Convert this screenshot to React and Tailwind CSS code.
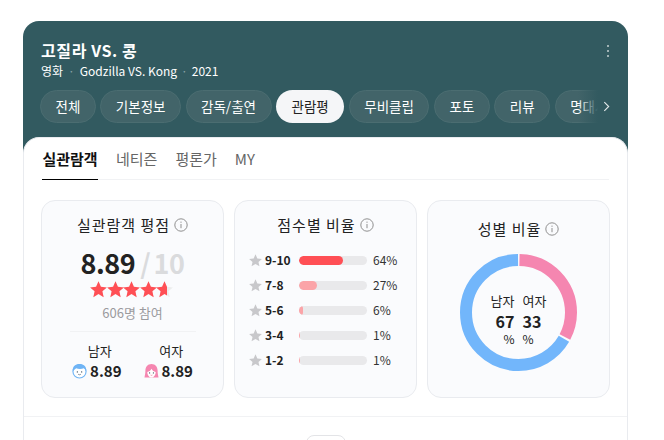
const font = { fontFamily: '"Noto Sans CJK KR", "Noto Sans", sans-serif' };

const tabs = ["전체", "기본정보", "감독/출연", "관람평", "무비클립", "포토", "리뷰", "명대사"];

const rows = [
  { label: "9-10", pct: 64, color: "#ff4f55" },
  { label: "7-8", pct: 27, color: "#fba4a8" },
  { label: "5-6", pct: 6, color: "#fba4a8" },
  { label: "3-4", pct: 1, color: "#fba4a8" },
  { label: "1-2", pct: 1, color: "#fba4a8" },
];

function Star({ className, fill }) {
  return (
    <svg viewBox="0 0 24 24" className={className} fill={fill}>
      <path d="M12 .5l3.400 7.700 8.400.8-6.300 5.600 1.800 8.200L12 18.500l-7.300 4.300 1.800-8.200L.2 9l8.400-.8z" />
    </svg>
  );
}

function Info() {
  return (
    <svg viewBox="0 0 14 14" className="w-[14px] h-[14px] shrink-0" fill="none" stroke="#8f8f8f">
      <circle cx="7" cy="7" r="6.200" />
      <path d="M7 6v4.200M7 3.600v1.200" />
    </svg>
  );
}

function Male() {
  return (
    <svg viewBox="0 0 16 16" className="w-[15px] h-[16px] shrink-0">
      <circle cx="8" cy="8.500" r="7" fill="#fff" stroke="#6fb4f5" strokeWidth="1.200" />
      <path d="M1 8.500C0 3 4 .5 8 .5s8 2.500 7 8c-1-2-1.500-3-2.500-3.500-2 1-6 1-8 0C3 6 2 7 1 8.500z" fill="#6fb4f5" />
      <circle cx="5.700" cy="9" r=".7" fill="#345" />
      <circle cx="10.300" cy="9" r=".7" fill="#345" />
      <path d="M6.500 11.500q1.500 1 3 0" fill="none" stroke="#345" strokeWidth=".6" />
    </svg>
  );
}

function Female() {
  return (
    <svg viewBox="0 0 16 16" className="w-[15px] h-[16px] shrink-0">
      <path d="M8 .5c4 0 6.500 3 6.500 7 0 3 .5 5 1 7.500H.5c.5-2.500 1-4.500 1-7.500 0-4 2.500-7 6.500-7z" fill="#f586b0" />
      <path d="M3.500 9c2-.5 3.500-1.500 4.500-3.500 1 2 2.500 3 4.500 3.500 0 3-2 6-4.500 6s-4.500-3-4.500-6z" fill="#fff" />
      <circle cx="6" cy="10" r=".6" fill="#345" />
      <circle cx="10" cy="10" r=".6" fill="#345" />
      <path d="M7 12.300q1 .7 2 0" fill="none" stroke="#e5557f" strokeWidth=".6" />
    </svg>
  );
}

function Panel({ title, low, children }) {
  return (
    <div className="flex-1 h-[198px] rounded-[14px] border border-[#e9ebef] bg-[#fafbfd] flex flex-col items-center">
      <div className={`${low ? "mt-[17px]" : "mt-[13px]"} flex items-center gap-1 text-[15px] tracking-[1px] leading-[22px] text-[#222]`}>
        <span>{title}</span>
        <Info />
      </div>
      {children}
    </div>
  );
}

function Donut() {
  const r = 52.5;
  const c = 2 * Math.PI * r;
  const gap = 2;
  return (
    <div className="relative w-[117px] h-[117px] mt-[14px]">
      <svg viewBox="0 0 117 117" className="w-full h-full -rotate-90">
        <circle
          cx="58.5" cy="58.5" r={r} fill="none" stroke="#f586b0" strokeWidth="12"
          strokeDasharray={`${c * 0.33 - gap} ${c}`} strokeDashoffset={-gap / 2}
        />
        <circle
          cx="58.5" cy="58.5" r={r} fill="none" stroke="#72b6fb" strokeWidth="12"
          strokeDasharray={`${c * 0.67 - gap} ${c}`} strokeDashoffset={-(c * 0.33 + gap / 2)}
        />
      </svg>
      <div className="absolute inset-0 pt-[8px] flex items-center justify-center gap-[8px] text-[#222]">
        <div className="w-[25px] flex flex-col items-end">
          <span className="text-[13px] leading-[18px]">남자</span>
          <span className="text-[16px] leading-[22px] font-bold">67</span>
          <span className="text-[12px] leading-[14px] h-[10px]">%</span>
        </div>
        <div className="w-[25px] flex flex-col items-start">
          <span className="text-[13px] leading-[18px]">여자</span>
          <span className="text-[16px] leading-[22px] font-bold">33</span>
          <span className="text-[12px] leading-[14px] h-[10px]">%</span>
        </div>
      </div>
    </div>
  );
}

export default function App() {
  return (
    <div style={font} className="h-[440px] overflow-hidden bg-white pt-[21px] pl-[23px]">
      <div className="w-[605px] rounded-t-[16px] bg-[#325a60]">
        {/* Header */}
        <div className="relative pt-[17px] pl-[18px]">
          <h1 className="text-[16px] tracking-[0.6px] leading-[24px] font-bold text-white">고질라 VS. 콩</h1>
          <p className="text-[12px] leading-[18px] text-white flex items-center">
            영화<span className="mx-[5px] text-[#8aa3a6]">·</span>Godzilla VS. Kong
            <span className="mx-[4px] text-[#8aa3a6]">·</span>2021
          </p>
          <div className="absolute right-[19px] top-[24px] flex flex-col gap-[3px]">
            <span className="w-[2px] h-[2px] bg-[#9fb2b4]" />
            <span className="w-[2px] h-[2px] bg-[#9fb2b4]" />
            <span className="w-[2px] h-[2px] bg-[#9fb2b4]" />
          </div>
        </div>

        {/* Pills */}
        <div className="relative mt-[10px] h-[47px] pl-[17px]">
          <div className="w-[558px] flex gap-[4.5px] overflow-hidden">
            {tabs.map((t) => (
              <span
                key={t}
                className={
                  t === "관람평"
                    ? "shrink-0 h-[33px] px-[15.5px] rounded-full bg-[#f5f6f8] text-[#222] text-[13.5px] leading-[33px]"
                    : "shrink-0 h-[33px] px-[14.5px] rounded-full bg-[#426469] border border-[#4b6d71] text-white text-[13.5px] leading-[31px]"
                }
              >
                {t}
              </span>
            ))}
          </div>
          <div className="absolute top-0 left-[555px] w-[20px] h-[33px] bg-gradient-to-r from-transparent to-[#325a60]" />
          <svg viewBox="0 0 8 12" className="absolute left-[580px] top-[11px] w-[7px] h-[11px]" fill="none" stroke="#e3e9ea" strokeWidth="1.300">
            <path d="M1.500 1l5 5-5 5" />
          </svg>
        </div>

        {/* Body */}
        <div className="rounded-t-[16px] bg-white border-x border-t border-[#e9ebef] h-[320px]">
          <div className="mx-[18px] h-[42px] flex gap-[18px] border-b border-[#f1f2f4] text-[15px]">
            <span className="w-[56px] text-center whitespace-nowrap border-b border-black h-[42px] leading-[42px] font-bold text-[#111]">실관람객</span>
            <span className="leading-[42px] text-[#666]">네티즌</span>
            <span className="leading-[42px] text-[#666]">평론가</span>
            <span className="leading-[42px] text-[#666]">MY</span>
          </div>

          <div className="mx-[17px] mt-[20px] flex gap-[10px]">
            <Panel title="실관람객 평점">
              <div className="mt-[9px] flex items-baseline leading-[36px] h-[36px] text-[27px] font-bold">
                <span className="tracking-[-0.5px] text-[#222]">8.89</span>
                <span className="text-[#dadbdd] ml-[5px]">/</span>
                <span className="text-[#dadbdd] ml-[3px] tracking-[-0.5px]">10</span>
              </div>
              <div className="relative flex -ml-[2px]">
                {[0, 1, 2, 3, 4].map((i) => (
                  <Star key={i} fill="#eceded" className="w-[17px] h-[17px] -mr-[0.4px]" />
                ))}
                <div className="absolute left-0 top-0 w-[77px] overflow-hidden flex">
                  {[0, 1, 2, 3, 4].map((i) => (
                    <Star key={i} fill="#ff4f55" className="w-[17px] h-[17px] shrink-0 -mr-[0.4px]" />
                  ))}
                </div>
              </div>
              <div className="mt-[6px] text-[13px] leading-[18px] text-[#9a9a9e]">606명 참여</div>
              <div className="mt-[9px] w-[126px] border-t border-[#f1f2f4]" />
              <div className="mt-[10px] flex gap-[22px]">
                <div className="flex flex-col items-center">
                  <span className="pl-[6px] text-[13px] leading-[18px] text-[#222]">남자</span>
                  <span className="flex items-center gap-[3px] text-[15px] leading-[22px] font-bold text-[#222]"><Male />8.89</span>
                </div>
                <div className="flex flex-col items-center">
                  <span className="pl-[6px] text-[13px] leading-[18px] text-[#222]">여자</span>
                  <span className="flex items-center gap-[3px] text-[15px] leading-[22px] font-bold text-[#222]"><Female />8.89</span>
                </div>
              </div>
            </Panel>

            <Panel title="점수별 비율">
              <div className="mt-[15px] self-start ml-[14px] flex flex-col gap-[7px]">
                {rows.map((r) => (
                  <div key={r.label} className="flex items-center h-[18px]">
                    <Star fill="#c8c8cb" className="w-[13px] h-[13px] shrink-0" />
                    <span className="w-[34px] ml-[3px] text-[12px] font-bold text-[#222]">{r.label}</span>
                    <div className="w-[68px] h-[9px] rounded-full bg-[#e9e9eb] overflow-hidden">
                      <div className="h-full rounded-full" style={{ width: `${r.pct}%`, background: r.color }} />
                    </div>
                    <span className="ml-[6px] text-[12px] text-[#333]">{r.pct}%</span>
                  </div>
                ))}
              </div>
            </Panel>

            <Panel title="성별 비율" low>
              <Donut />
            </Panel>
          </div>

          <div className="mt-[18px] border-t border-[#f1f2f4]" />
          <div className="mt-[18px] mx-auto w-[40px] h-[30px] rounded-[8px] border border-[#e3e4e7] bg-white" />
        </div>
      </div>
    </div>
  );
}
